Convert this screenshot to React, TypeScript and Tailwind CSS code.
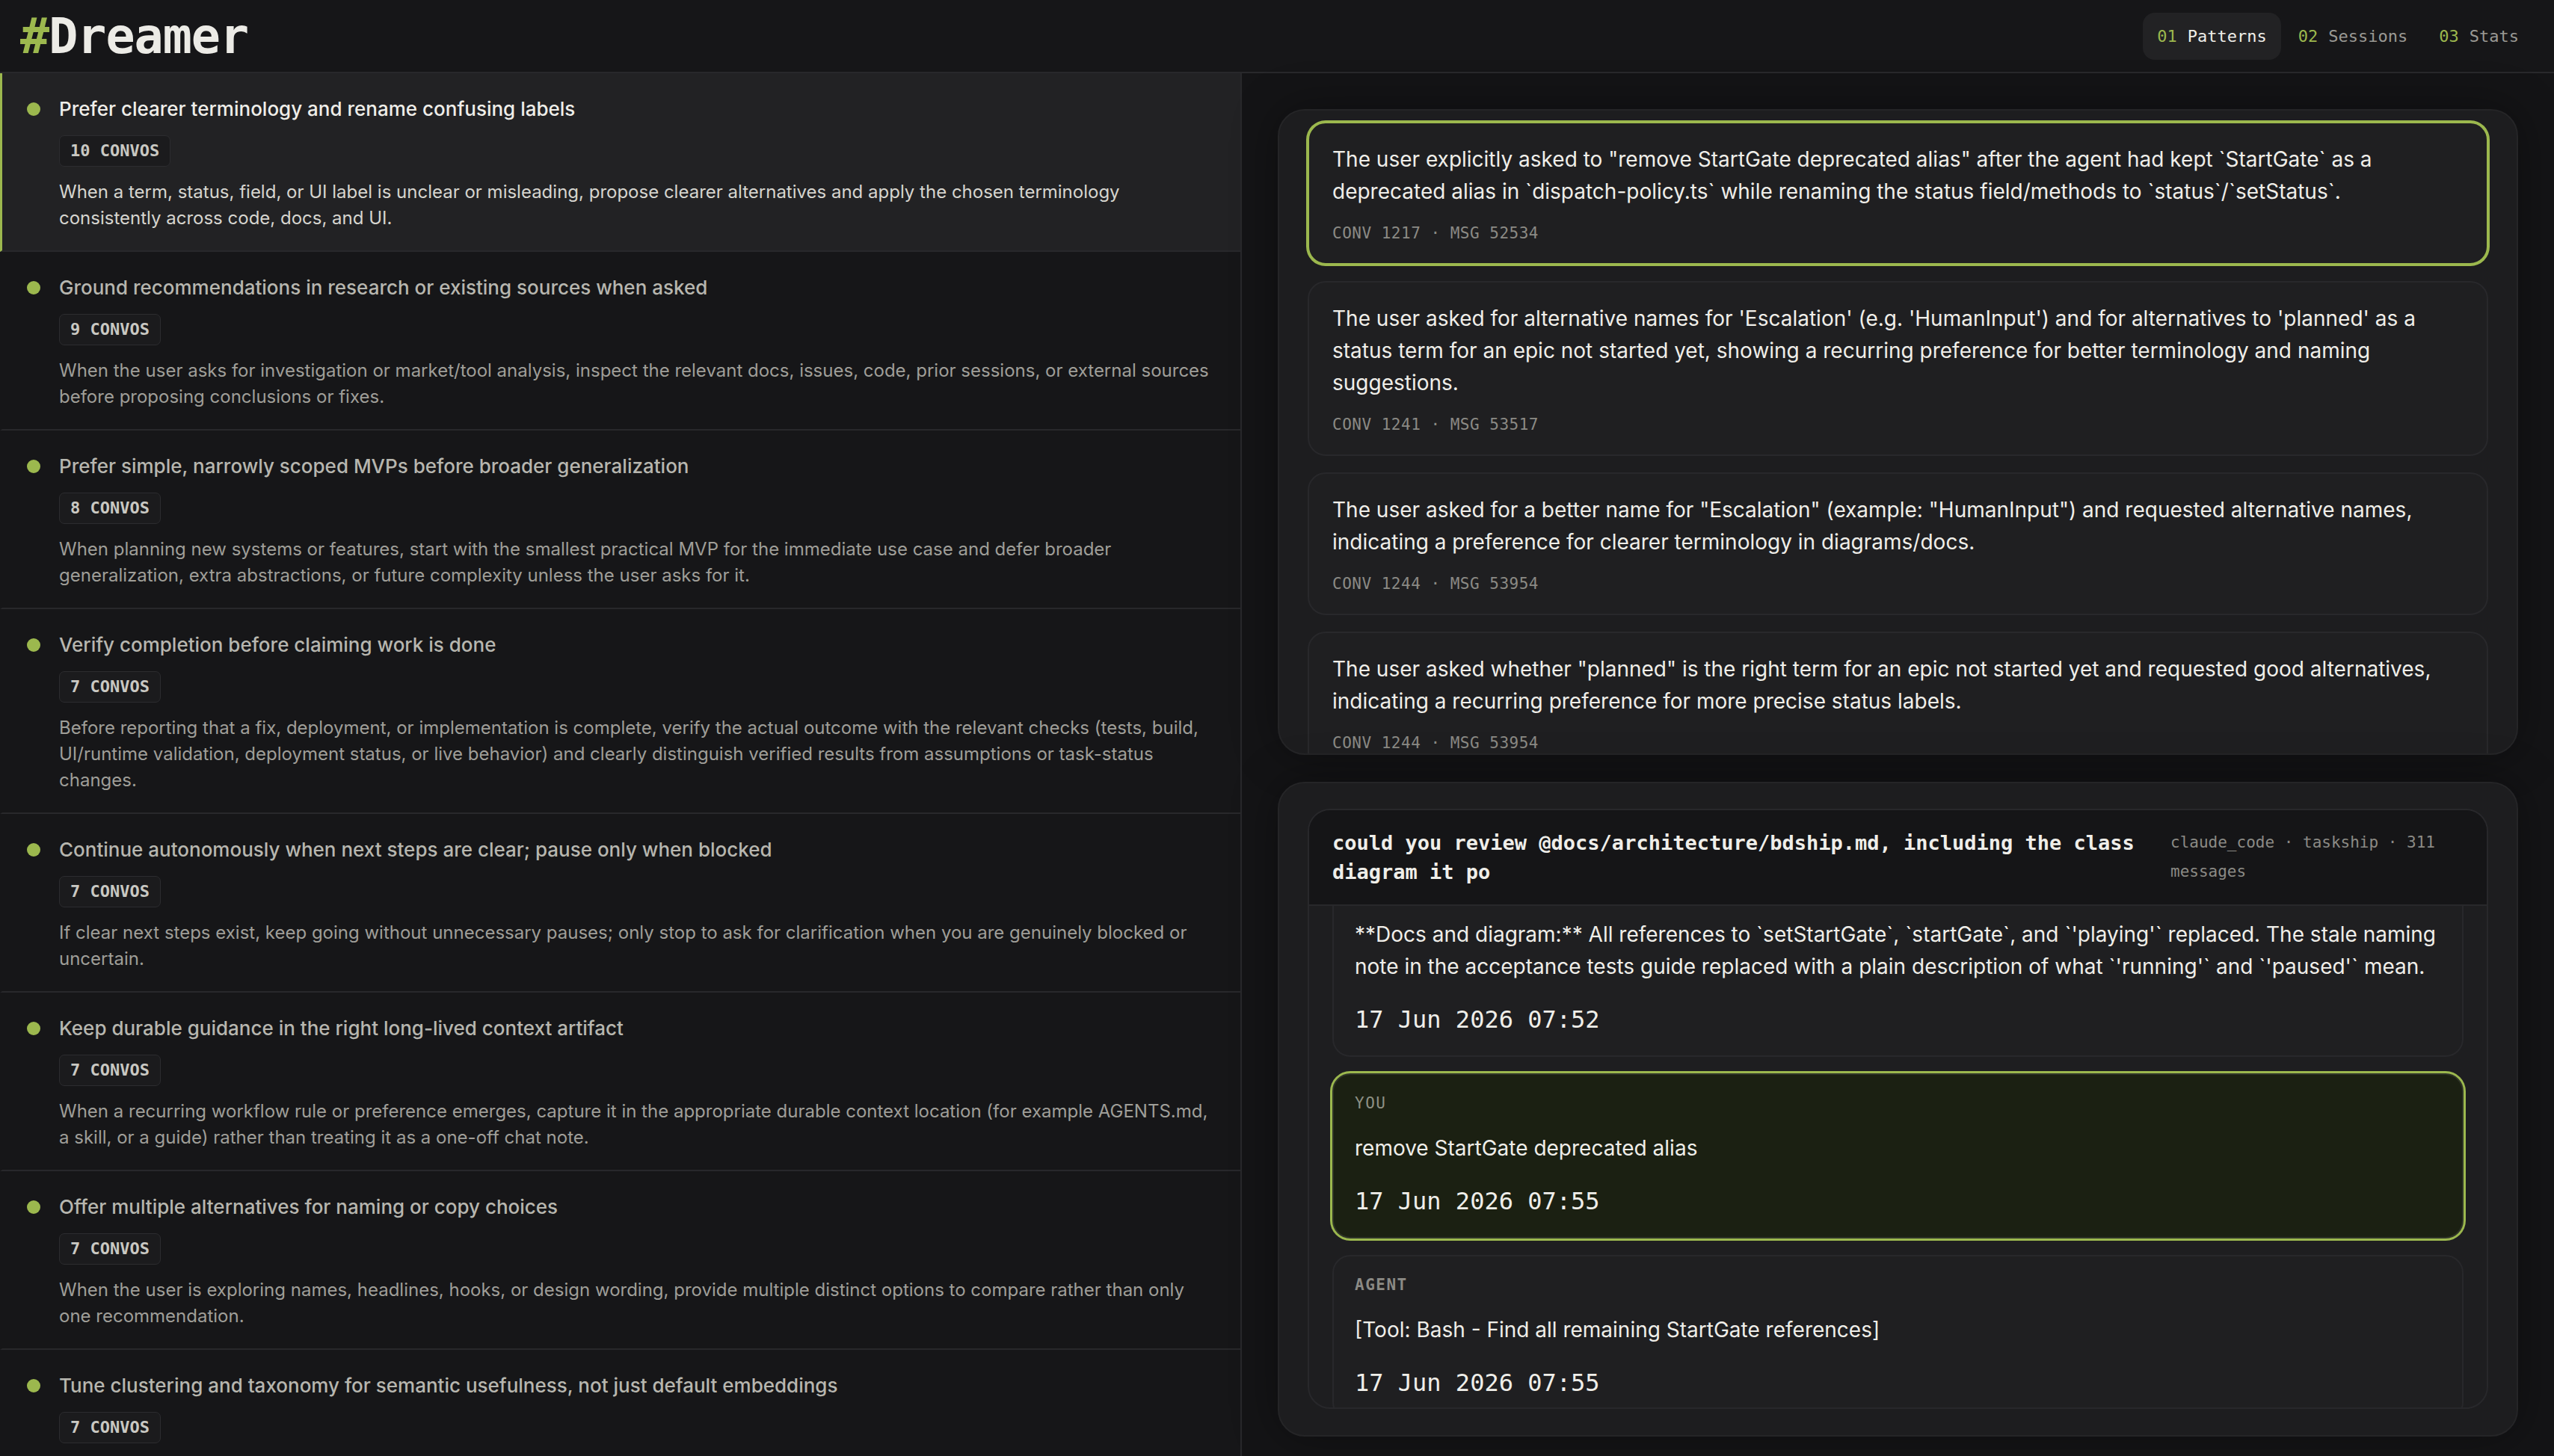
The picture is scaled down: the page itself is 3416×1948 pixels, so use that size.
import React, { useEffect, useRef } from 'react';

const patterns = [
  {
    title: 'Prefer clearer terminology and rename confusing labels',
    count: 10,
    desc: 'When a term, status, field, or UI label is unclear or misleading, propose clearer alternatives and apply the chosen terminology consistently across code, docs, and UI.',
  },
  {
    title: 'Ground recommendations in research or existing sources when asked',
    count: 9,
    desc: 'When the user asks for investigation or market/tool analysis, inspect the relevant docs, issues, code, prior sessions, or external sources before proposing conclusions or fixes.',
  },
  {
    title: 'Prefer simple, narrowly scoped MVPs before broader generalization',
    count: 8,
    desc: 'When planning new systems or features, start with the smallest practical MVP for the immediate use case and defer broader generalization, extra abstractions, or future complexity unless the user asks for it.',
  },
  {
    title: 'Verify completion before claiming work is done',
    count: 7,
    desc: 'Before reporting that a fix, deployment, or implementation is complete, verify the actual outcome with the relevant checks (tests, build, UI/runtime validation, deployment status, or live behavior) and clearly distinguish verified results from assumptions or task-status changes.',
  },
  {
    title: 'Continue autonomously when next steps are clear; pause only when blocked',
    count: 7,
    desc: 'If clear next steps exist, keep going without unnecessary pauses; only stop to ask for clarification when you are genuinely blocked or uncertain.',
  },
  {
    title: 'Keep durable guidance in the right long-lived context artifact',
    count: 7,
    desc: 'When a recurring workflow rule or preference emerges, capture it in the appropriate durable context location (for example AGENTS.md, a skill, or a guide) rather than treating it as a one-off chat note.',
  },
  {
    title: 'Offer multiple alternatives for naming or copy choices',
    count: 7,
    desc: 'When the user is exploring names, headlines, hooks, or design wording, provide multiple distinct options to compare rather than only one recommendation.',
  },
  {
    title: 'Tune clustering and taxonomy for semantic usefulness, not just default embeddings',
    count: 7,
    desc: 'When grouping conversations or patterns, adjust clustering and labels so categories are meaningful to the user rather than relying on default embedding similarity.',
  },
];

const evidence = [
  {
    text: 'The user explicitly asked to "remove StartGate deprecated alias" after the agent had kept `StartGate` as a deprecated alias in `dispatch-policy.ts` while renaming the status field/methods to `status`/`setStatus`.',
    meta: 'CONV 1217 · MSG 52534',
    active: true,
  },
  {
    text: "The user asked for alternative names for 'Escalation' (e.g. 'HumanInput') and for alternatives to 'planned' as a status term for an epic not started yet, showing a recurring preference for better terminology and naming suggestions.",
    meta: 'CONV 1241 · MSG 53517',
  },
  {
    text: 'The user asked for a better name for "Escalation" (example: "HumanInput") and requested alternative names, indicating a preference for clearer terminology in diagrams/docs.',
    meta: 'CONV 1244 · MSG 53954',
  },
  {
    text: 'The user asked whether "planned" is the right term for an epic not started yet and requested good alternatives, indicating a recurring preference for more precise status labels.',
    meta: 'CONV 1244 · MSG 53954',
  },
];

const messages = [
  {
    role: 'Agent',
    text: "**Docs and diagram:** All references to `setStartGate`, `startGate`, and `'playing'` replaced. The stale naming note in the acceptance tests guide replaced with a plain description of what `'running'` and `'paused'` mean.",
    time: '17 Jun 2026 07:52',
  },
  { role: 'You', text: 'remove StartGate deprecated alias', time: '17 Jun 2026 07:55', active: true },
  { role: 'Agent', text: '[Tool: Bash - Find all remaining StartGate references]', time: '17 Jun 2026 07:55' },
  { role: 'Agent', text: '[Tool: Grep - StartGate in src/]', time: '17 Jun 2026 07:56' },
];

const tabs = [
  { n: '01', label: 'Patterns', active: true },
  { n: '02', label: 'Sessions' },
  { n: '03', label: 'Stats' },
];

export default function App() {
  const scroller = useRef<HTMLDivElement>(null);
  const target = useRef<HTMLDivElement>(null);

  useEffect(() => {
    // keep the selected message in view like the real app does
    if (scroller.current && target.current) {
      scroller.current.scrollTop = target.current.offsetTop - 224;
    }
  }, []);

  return (
    <div className="h-screen flex flex-col overflow-hidden bg-[#161618] font-['Inter',sans-serif] text-[#ecebe6]">
      {/* Header */}
      <header className="h-[98px] shrink-0 flex items-center justify-between border-b-2 border-[#28282b] pl-[27px] pr-[28px]">
        <h1 className="font-['DejaVu_Sans_Mono',monospace] font-bold text-[65px] leading-none tracking-[-1px]">
          <span className="text-[#9cb84e]">#</span>Dreamer
        </h1>
        <nav className="flex gap-[4px] font-['DejaVu_Sans_Mono',monospace] text-[22px]">
          {tabs.map((t) => (
            <div
              key={t.n}
              className={`h-[63px] px-[19px] flex items-center gap-[14px] rounded-[16px] ${t.active ? 'bg-[#222224] text-[#efeee9]' : 'text-[#9a9994]'}`}
            >
              <span className="text-[#9cb84e]">{t.n}</span>
              <span>{t.label}</span>
            </div>
          ))}
        </nav>
      </header>

      <div className="flex-1 min-h-0 flex">
        {/* Left: pattern list */}
        <div className="w-[1661px] shrink-0 border-r-2 border-[#28282b] overflow-hidden">
          {patterns.map((p, i) => {
            const active = i === 0;
            return (
              <div
                key={p.title}
                className={`flex gap-[25px] border-b-2 border-[#28282b] border-l-[3px] pl-[33px] pr-[36px] pt-[30px] pb-[26px] ${active ? 'bg-[#222224] border-l-[#9cb84e]' : 'border-l-transparent'}`}
              >
                <div className="h-[36px] flex items-center shrink-0">
                  <span className="w-[18px] h-[18px] rounded-full bg-[#9cb84e]" />
                </div>
                <div className="flex-1 flex flex-col items-start gap-[16px]">
                  <div className={`text-[26px] leading-[36px] font-medium mb-[1px] ${active ? 'text-[#efeee9]' : 'text-[#b7b6af]'}`}>
                    {p.title}
                  </div>
                  <span className="font-['DejaVu_Sans_Mono',monospace] font-bold text-[22px] leading-[28px] px-[14px] py-[6px] rounded-[7px] border border-[#2c2c2f] bg-[#1b1b1d] text-[#c9c8c2]">
                    {p.count} CONVOS
                  </span>
                  <p className={`text-[24px] leading-[35px] ${active ? 'text-[#d6d5cf]' : 'text-[#9f9e98]'}`}>{p.desc}</p>
                </div>
              </div>
            );
          })}
        </div>

        {/* Right: evidence + session */}
        <div className="flex-1 min-w-0 flex flex-col gap-[36px] pt-[48px] px-[48px] pb-[26px] bg-[#141416]">
          <div className="h-[864px] shrink-0 rounded-[36px] border-2 border-[#252527] bg-[#1d1d1f] overflow-hidden px-[38px] pt-[15px] flex flex-col gap-[22px] shadow-[0_0_60px_rgba(0,0,0,0.35)]">
            {evidence.map((e, i) => (
              <div
                key={i}
                className={`shrink-0 rounded-[24px] border-2 bg-[#1f1f21] px-[31px] pt-[27px] pb-[26px] ${e.active ? 'border-[#9cb84e] ring-2 ring-[#9cb84e]' : 'border-[#28282b]'}`}
              >
                <p className="text-[28px] leading-[43px] text-[#efeee9]">{e.text}</p>
                <div className="mt-[20px] font-['DejaVu_Sans_Mono',monospace] text-[21px] leading-[28px] tracking-[0.5px] text-[#8b8a85]">
                  {e.meta}
                </div>
              </div>
            ))}
          </div>

          <div className="flex-1 min-h-0 rounded-[36px] border-2 border-[#252527] bg-[#1d1d1f] px-[38px] pt-[34px] pb-[35px] flex flex-col shadow-[0_0_60px_rgba(0,0,0,0.35)]">
            <div className="flex-1 min-h-0 flex flex-col rounded-[30px] border-2 border-[#28282b] bg-[#1e1e20] overflow-hidden">
              <div className="shrink-0 flex items-start gap-[32px] bg-[#151517] border-b-2 border-[#28282b] px-[31px] py-[24px] font-['DejaVu_Sans_Mono',monospace]">
                <div className="flex-1 text-[27px] leading-[39px] font-bold text-[#efeee9]">
                  could you review @docs/architecture/bdship.md, including the class diagram it po
                </div>
                <div className="w-[392px] shrink-0 text-[21px] leading-[39px] text-[#8b8a85]">
                  claude_code · taskship · 311 messages
                </div>
              </div>

              <div ref={scroller} className="relative flex-1 min-h-0 overflow-hidden px-[31px] pt-[24px]">
                <div className="flex flex-col gap-[22px] pb-[24px]">
                  {messages.map((m, i) => (
                    <div
                      key={i}
                      ref={m.active ? target : undefined}
                      className={`shrink-0 flex flex-col gap-[27px] rounded-[24px] border-2 px-[28px] py-[26px] ${m.active ? 'bg-[#1b2012] border-[#2f3428] ring-[3px] ring-[#9cb84e]' : 'bg-[#1f1f21] border-[#28282b]'}`}
                    >
                      <div className={`font-['DejaVu_Sans_Mono',monospace] text-[21px] leading-[24px] tracking-[1.5px] uppercase ${m.active ? 'text-[#8e9084]' : 'text-[#8b8a85] font-bold'}`}>
                        {m.role}
                      </div>
                      <p className="text-[28px] leading-[43px] text-[#efeee9]">{m.text}</p>
                      <div className="font-['DejaVu_Sans_Mono',monospace] text-[32px] leading-[44px] text-[#efeee9]">{m.time}</div>
                    </div>
                  ))}
                </div>
              </div>
            </div>
          </div>
        </div>
      </div>
    </div>
  );
}
